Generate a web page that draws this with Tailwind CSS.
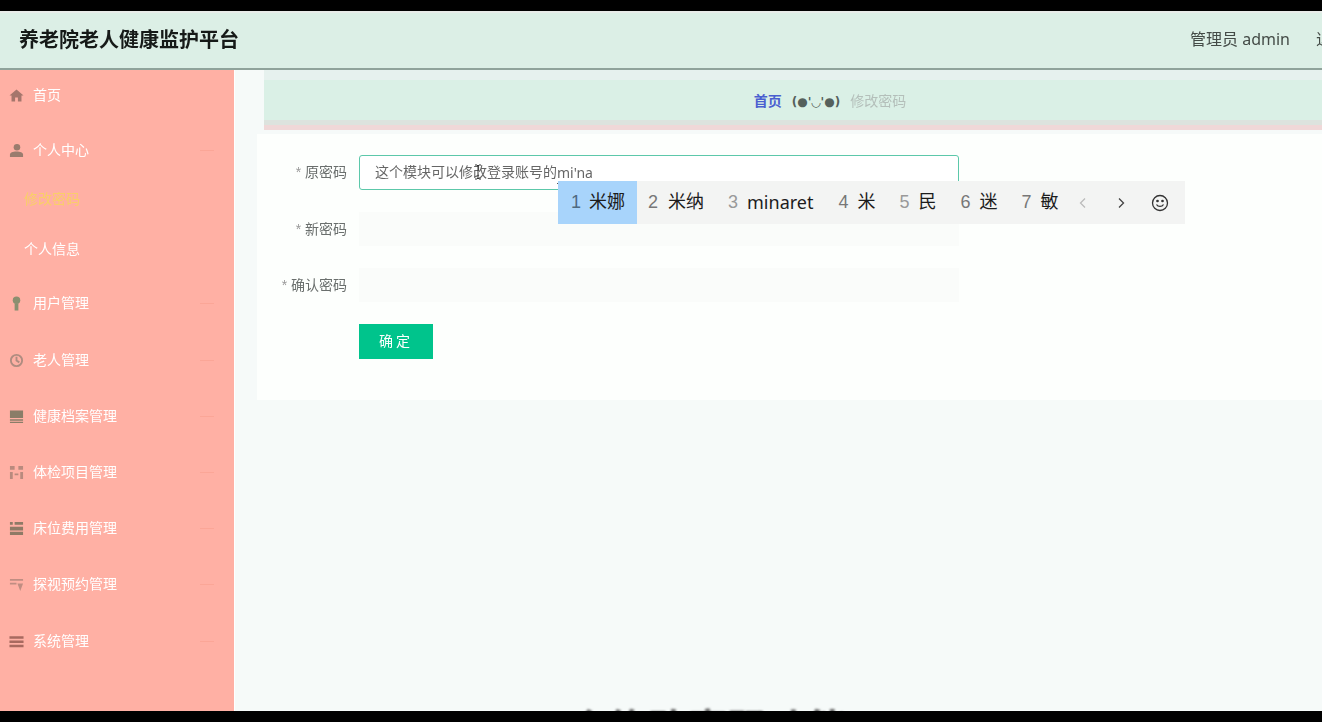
<!DOCTYPE html>
<html lang="zh-CN">
<head>
    <meta charset="UTF-8">
    <meta name="viewport" content="width=device-width, initial-scale=1.0">
    <title>养老院老人健康监护平台</title>
    <script src="https://cdn.jsdelivr.net/npm/@tailwindcss/browser@4"></script>
</head>
<body class="bg-black font-['Liberation_Sans','Noto_Sans_CJK_SC',sans-serif] overflow-hidden">
<div class="relative h-[722px] w-[1322px] overflow-hidden flex flex-col">
    <div class="h-[11px] bg-black shrink-0"></div>

    <header class="h-[59px] shrink-0 bg-[#dcefe6] border-t-2 border-t-[#e8ece9] border-b-2 border-b-[#8fa39b] flex items-center overflow-hidden whitespace-nowrap">
        <h1 class="pl-[19px] text-[20px] font-bold text-[#161a18] blur-[0.4px] pb-[1px]">养老院老人健康监护平台</h1>
        <div class="ml-auto flex items-center text-[16px] text-[#444b47] -mr-[40px] pb-[4px] font-['Noto_Sans','Noto_Sans_CJK_SC',sans-serif] blur-[0.3px]">
            <span class="w-[126px]">管理员 admin</span>
            <span class="w-[46px]">退出</span>
        </div>
    </header>

    <div class="flex flex-1 min-h-0">
        <aside class="w-[234px] shrink-0 bg-[#ffb0a4] text-[14px] text-white">
            <div class="pt-[11px] blur-[0.7px]">
                <div class="h-[28px] flex items-center gap-[9px] pl-[9px]">
                    <svg class="w-[15px] h-[15px] text-[#a5766c]" viewBox="0 0 16 16" fill="currentColor"><path d="M8 1.5 0.5 8h2.2v6.5h3.8V10h3v4.5h3.8V8h2.2z"/></svg>
                    <span>首页</span>
                </div>
                <div class="h-[28px] mt-[27px] flex items-center gap-[9px] pl-[9px] pr-[20px]">
                    <svg class="w-[15px] h-[15px] text-[#9a7c6e]" viewBox="0 0 16 16" fill="currentColor"><circle cx="8.5" cy="4.5" r="3.5"/><path d="M1 15v-2.5C1 10 4 9 8 9s7 1 7 3.500V15z"/></svg>
                    <span>个人中心</span>
                    <span class="ml-auto w-[14px] h-[1px] bg-[#fba697]"></span>
                </div>
                <div class="h-[28px] mt-[21px] flex items-center pl-[24px] text-[#f9cf68]">修改密码</div>
                <div class="h-[28px] mt-[22px] flex items-center pl-[24px]">个人信息</div>
                <div class="h-[28px] mt-[26px] flex items-center gap-[9px] pl-[9px] pr-[20px]">
                    <svg class="w-[15px] h-[15px] text-[#8b8f70]" viewBox="0 0 16 16" fill="currentColor"><circle cx="8" cy="4.500" r="4"/><path d="M6 8h4v7.500H6z"/></svg>
                    <span>用户管理</span>
                    <span class="ml-auto w-[14px] h-[1px] bg-[#fba697]"></span>
                </div>
                <div class="h-[28px] mt-[29px] flex items-center gap-[9px] pl-[9px] pr-[20px]">
                    <svg class="w-[15px] h-[15px] text-[#b08c80]" viewBox="0 0 16 16" fill="none" stroke="currentColor" stroke-width="2"><circle cx="8" cy="8" r="6"/><path d="M8 4v4l3 2"/></svg>
                    <span>老人管理</span>
                    <span class="ml-auto w-[14px] h-[1px] bg-[#fba697]"></span>
                </div>
                <div class="h-[28px] mt-[28px] flex items-center gap-[9px] pl-[9px] pr-[20px]">
                    <svg class="w-[15px] h-[15px] text-[#8a7d68]" viewBox="0 0 16 16" fill="currentColor"><path d="M1 1.500h14v8H1zM1 11h14v1.500H1zM1 13.500h14V15H1z"/></svg>
                    <span>健康档案管理</span>
                    <span class="ml-auto w-[14px] h-[1px] bg-[#fba697]"></span>
                </div>
                <div class="h-[28px] mt-[28px] flex items-center gap-[9px] pl-[9px] pr-[20px]">
                    <svg class="w-[15px] h-[15px] text-[#b98a7e]" viewBox="0 0 16 16" fill="currentColor"><path d="M1 1h5v4H1zM10 1h5v4h-5zM1 7.500h3V15H1zM12 7.500h3V15h-3zM6 9h4v2H6z"/></svg>
                    <span>体检项目管理</span>
                    <span class="ml-auto w-[14px] h-[1px] bg-[#fba697]"></span>
                </div>
                <div class="h-[28px] mt-[28px] flex items-center gap-[9px] pl-[9px] pr-[20px]">
                    <svg class="w-[15px] h-[15px] text-[#8f7a66]" viewBox="0 0 16 16" fill="currentColor"><path d="M1 1h3v3H1zM6 1h9v3H6zM1 6h14v4H1zM1 11.500h14V15H1z"/></svg>
                    <span>床位费用管理</span>
                    <span class="ml-auto w-[14px] h-[1px] bg-[#fba697]"></span>
                </div>
                <div class="h-[28px] mt-[28px] flex items-center gap-[9px] pl-[9px] pr-[20px]">
                    <svg class="w-[15px] h-[15px] text-[#c08d82]" viewBox="0 0 16 16" fill="currentColor"><path d="M1 2h14v2H1zM1 6h7v2H1zM9 7h6l-3 8z"/></svg>
                    <span>探视预约管理</span>
                    <span class="ml-auto w-[14px] h-[1px] bg-[#fba697]"></span>
                </div>
                <div class="h-[28px] mt-[29px] flex items-center gap-[9px] pl-[9px] pr-[20px]">
                    <svg class="w-[15px] h-[15px] text-[#a8695f]" viewBox="0 0 16 16" fill="currentColor"><path d="M0.500 2.500h15v2.500H0.500zM0.500 7h15v2.500H0.500zM0.500 11.500h15V14H0.500z"/></svg>
                    <span>系统管理</span>
                    <span class="ml-auto w-[14px] h-[1px] bg-[#fba697]"></span>
                </div>
            </div>
        </aside>

        <main class="flex-1 min-w-0 bg-[#f6faf9] border-l border-l-white pl-[22px]">
            <div class="h-[10px] ml-[7px] bg-[#e6f1ee]"></div>
            <div class="ml-[7px] h-[40px] bg-[#daf0e6] flex items-center justify-center text-[14px] pl-[74px] pt-[3px]">
                <span class="font-bold text-[#4a5fd0]">首页</span>
                <span class="mx-[10px] text-[#55605c] font-['DejaVu_Sans'] text-[12px] font-bold whitespace-nowrap">(●'◡'●)</span>
                <span class="text-[#b4bfba] blur-[0.6px]">修改密码</span>
            </div>
            <div class="ml-[7px] h-[5px] bg-[#dde3de]"></div>
            <div class="ml-[7px] h-[5px] bg-[#f0d8d8]"></div>
            <div class="h-[4px]"></div>

            <form class="bg-[#fdfffd] h-[266px] pt-[21px] text-[14px] text-[#6a6f6d]">
                <div class="flex items-center h-[35px]">
                    <label class="w-[90px] text-right blur-[0.4px]"><span class="text-[#999]">* </span>原密码</label>
                    <div class="ml-[12px] w-[600px] h-full rounded-[3px] border border-[#5cc8aa] flex items-center pl-[15px] text-[#666] bg-white">
                        <span class="blur-[0.4px]">这个模块可以修改登录账号的</span><span class="border-b border-dotted border-[#555] font-['Noto_Sans'] blur-[0.2px]">mi'na</span>
                    </div>
                </div>
                <div class="flex items-center h-[34px] mt-[22px]">
                    <label class="w-[90px] text-right blur-[0.4px]"><span class="text-[#999]">* </span>新密码</label>
                    <div class="ml-[12px] w-[600px] h-full bg-[#fafcfa]"></div>
                </div>
                <div class="flex items-center h-[34px] mt-[22px]">
                    <label class="w-[90px] text-right blur-[0.4px]"><span class="text-[#999]">* </span>确认密码</label>
                    <div class="ml-[12px] w-[600px] h-full bg-[#fafcfa]"></div>
                </div>
                <div class="pl-[102px] mt-[22px]">
                    <button type="button" class="w-[74px] h-[35px] bg-[#00c48c] text-white text-[14px] tracking-[3px] blur-[0.3px]">确定</button>
                </div>
            </form>
        </main>
    </div>

    <div class="h-[11px] bg-black shrink-0"></div>

    <!-- IME candidate popup over the input -->
    <div class="absolute left-[558px] top-[181px] w-[627px] h-[43px] bg-[#f3f4f3] flex items-center text-[18px] text-[#1c1c1c] whitespace-nowrap">
        <div class="h-full w-[79px] pl-[13px] bg-[#a8d4fb] flex items-center gap-[8px]"><span class="text-[#4f6a80]">1</span><span>米娜</span></div>
        <div class="pl-[11px] flex items-center gap-[10px]"><span class="text-[#777]">2</span><span>米纳</span></div>
        <div class="pl-[24px] flex items-center gap-[9px]"><span class="text-[#999]">3</span><span class="font-['Noto_Sans']">minaret</span></div>
        <div class="pl-[25px] flex items-center gap-[9px]"><span class="text-[#777]">4</span><span>米</span></div>
        <div class="pl-[24px] flex items-center gap-[9px]"><span class="text-[#999]">5</span><span>民</span></div>
        <div class="pl-[24px] flex items-center gap-[9px]"><span class="text-[#777]">6</span><span>迷</span></div>
        <div class="pl-[24px] flex items-center gap-[9px]"><span class="text-[#777]">7</span><span>敏</span></div>
        <svg class="ml-[19px] w-[10px] h-[12px] text-[#bbb]" viewBox="0 0 10 12" fill="none" stroke="currentColor" stroke-width="1.300"><path d="M7 1.500 2.500 6 7 10.500"/></svg>
        <svg class="ml-[28px] w-[10px] h-[12px] text-[#444]" viewBox="0 0 10 12" fill="none" stroke="currentColor" stroke-width="1.300"><path d="M3 1.500 7.500 6 3 10.500"/></svg>
        <svg class="ml-[25px] w-[18px] h-[18px] text-[#333]" viewBox="0 0 18 18" fill="none" stroke="currentColor" stroke-width="1.300"><circle cx="9" cy="9" r="7.500"/><circle cx="6.500" cy="7" r="0.700" fill="currentColor"/><circle cx="11.500" cy="7" r="0.700" fill="currentColor"/><path d="M5.500 10.500c1.500 2.500 5.500 2.500 7 0"/></svg>
    </div>

    <!-- text cursor -->
    <svg class="absolute left-[474px] top-[164px] w-[8px] h-[16px] text-[#333]" viewBox="0 0 8 16" fill="none" stroke="currentColor" stroke-width="1"><path d="M1 1h2l1 1 1-1h2M4 2v12M1 15h2l1-1 1 1h2"/></svg>

    <!-- caption cut off by the bottom bar -->
    <div class="absolute left-[568px] top-[705px] h-[6px] w-[300px] overflow-hidden">
        <div class="text-[40px] leading-[48px] font-bold text-[#666] blur-[1.2px] whitespace-nowrap">个修改密码功能</div>
    </div>
</div>
</body>
</html>
